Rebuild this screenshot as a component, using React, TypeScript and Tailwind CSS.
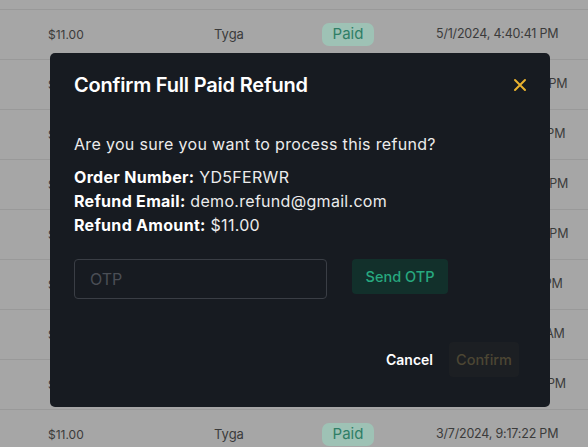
import React from "react";

const rows = [
  { amount: "$11.00", name: "Tyga", date: "5/2/2024, 1:12:09 PM" },
  { amount: "$11.00", name: "Tyga", date: "5/1/2024, 4:40:41 PM" },
  { amount: "$11.00", name: "Tyga", date: "4/28/2024, 1:05:37 PM" },
  { amount: "$11.00", name: "Tyga", date: "4/20/2024, 1:22:18 PM" },
  { amount: "$11.00", name: "Tyga", date: "4/15/2024, 2:48:02 PM" },
  { amount: "$11.00", name: "Tyga", date: "4/2/2024, 12:48:02 PM" },
  { amount: "$11.00", name: "Tyga", date: "4/2/2024, 12:30:11 PM" },
  { amount: "$11.00", name: "Tyga", date: "3/21/2024, 1:56:27 AM" },
  { amount: "$11.00", name: "Tyga", date: "3/9/2024, 10:14:45 PM" },
  { amount: "$11.00", name: "Tyga", date: "3/7/2024, 9:17:22 PM" },
];

export default function App() {
  return (
    <div
      className="relative w-[588px] h-[447px] overflow-hidden bg-[#a6a6a6]"
      style={{ fontFamily: "Inter, 'Noto Sans', sans-serif" }}
    >
      <div className="mt-[-40px] flex flex-col">
        {rows.map((r, i) => (
          <div
            key={i}
            className="h-[50px] flex items-center border-b border-[#999999] pl-[48px] text-[12px] text-[#3b3b3b]"
          >
            <div className="w-[166px]">{r.amount}</div>
            <div className="w-[108px] text-[13px]">{r.name}</div>
            <div className="w-[114px]">
              <span className="inline-flex items-center justify-center w-[52px] h-[23px] rounded-[7px] bg-[#9ec2b5] text-[#2f7e66] text-[15px]">
                Paid
              </span>
            </div>
            <div className="whitespace-nowrap text-[12.5px] tracking-[-0.2px]">{r.date}</div>
          </div>
        ))}
      </div>

      <div className="absolute left-[50px] top-[53px] w-[500px] h-[354px] rounded-[5px] bg-[#171b21] flex flex-col pl-[24px] pr-[23px] pt-[18px]">
        <div className="flex items-center justify-between h-[28px]">
          <h2 className="text-[20px] leading-[28px] font-semibold tracking-[-0.2px] text-white">
            Confirm Full Paid Refund
          </h2>
          <svg width="14" height="14" viewBox="0 0 14 14">
            <path d="M2 2 L12 12 M12 2 L2 12" stroke="#e9b22f" strokeWidth="2" strokeLinecap="round" />
          </svg>
        </div>

        <p className="mt-[33px] text-[16px] leading-[24px] tracking-[0.32px] text-[#ececec]">
          Are you sure you want to process this refund?
        </p>

        <div className="mt-[9px] text-[16px] leading-[24px] tracking-[0.3px] text-[#ececec]">
          <div>
            <span className="font-bold text-white">Order Number:</span> YD5FERWR
          </div>
          <div>
            <span className="font-bold text-white">Refund Email:</span> demo.refund@gmail.com
          </div>
          <div>
            <span className="font-bold text-white">Refund Amount:</span> $11.00
          </div>
        </div>

        <div className="mt-[22px] flex items-start gap-[25px]">
          <div className="w-[253px] h-[40px] rounded-[4px] border border-[#3a3e45] flex items-center pl-[15px] text-[16px] text-[#4a4e55]">
            OTP
          </div>
          <button className="w-[96px] h-[35px] rounded-[4px] bg-[#12302b] text-[#27a87f] text-[14.5px] font-medium">
            Send OTP
          </button>
        </div>

        <div className="mt-[43px] flex items-center justify-end gap-[16px] pr-[8px]">
          <button className="text-[14px] font-semibold text-white">Cancel</button>
          <button className="w-[70px] h-[35px] rounded-[4px] bg-[#1c1f23] text-[#4c4633] text-[14.5px] font-medium">
            Confirm
          </button>
        </div>
      </div>
    </div>
  );
}
